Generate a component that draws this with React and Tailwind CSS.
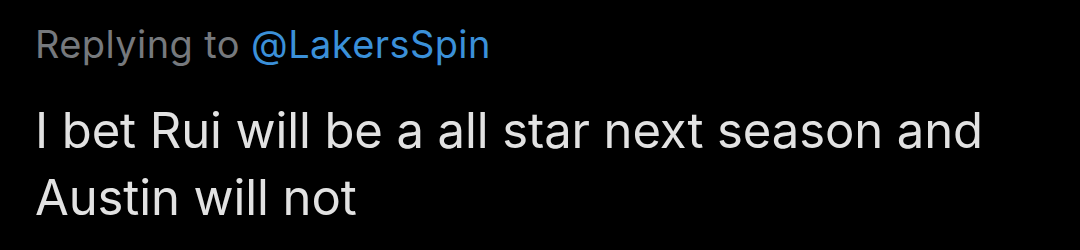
export default function App() {
  return (
    <div
      className="w-[1080px] h-[250px] bg-black overflow-hidden px-[35px] pt-[21px]"
      style={{ fontFamily: 'Inter, "Noto Sans", sans-serif' }}
    >
      <p className="text-[38px] leading-[46px] text-[#76797d] tracking-[0.4px]">
        Replying to <span className="text-[#3b90d9]">@LakersSpin</span>
      </p>
      <p className="mt-[30px] text-[49px] leading-[67px] text-[#e2e2e2] tracking-[-0.1px]">
        I bet Rui will be a all star next season and
        <br />
        Austin will not
      </p>
    </div>
  );
}
